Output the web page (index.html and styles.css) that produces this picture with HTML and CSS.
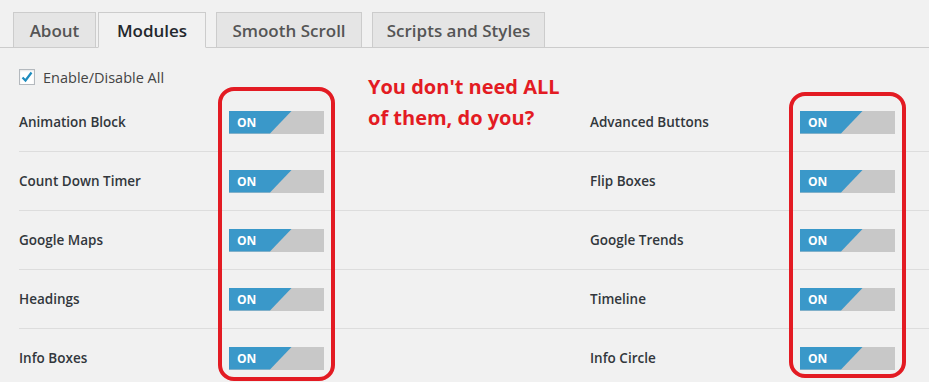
FILE: index.html
```html
<!DOCTYPE html>
<html lang="en">
<head>
  <meta charset="UTF-8" />
  <title>Modules</title>
  <link rel="stylesheet" href="styles.css">
</head>
<body>
  <div class="page">
    <div class="tabs">
      <a class="tab">About</a>
      <a class="tab active">Modules</a>
      <a class="tab">Smooth Scroll</a>
      <a class="tab">Scripts and Styles</a>
    </div>

    <label class="check-all">
      <span class="box">
        <svg width="14" height="14" viewBox="0 0 14 14"><path d="M2.5 7.5 L5.5 10.5 L11.5 2.5" fill="none" stroke="#1e8cbe" stroke-width="2.2"/></svg>
      </span>
      Enable/Disable All
    </label>

    <div class="modules">
      <div class="row"><span class="name">Animation Block</span><span class="toggle"><b>ON</b></span></div>
      <div class="row"><span class="name">Advanced Buttons</span><span class="toggle"><b>ON</b></span></div>
      <div class="row"><span class="name">Count Down Timer</span><span class="toggle"><b>ON</b></span></div>
      <div class="row"><span class="name">Flip Boxes</span><span class="toggle"><b>ON</b></span></div>
      <div class="row"><span class="name">Google Maps</span><span class="toggle"><b>ON</b></span></div>
      <div class="row"><span class="name">Google Trends</span><span class="toggle"><b>ON</b></span></div>
      <div class="row"><span class="name">Headings</span><span class="toggle"><b>ON</b></span></div>
      <div class="row"><span class="name">Timeline</span><span class="toggle"><b>ON</b></span></div>
      <div class="row"><span class="name">Info Boxes</span><span class="toggle"><b>ON</b></span></div>
      <div class="row"><span class="name">Info Circle</span><span class="toggle"><b>ON</b></span></div>
    </div>

    <!-- annotations drawn over the screenshot -->
    <div class="note">You don't need ALL<br>of them, do you?</div>
    <div class="ring ring-left"></div>
    <div class="ring ring-right"></div>
  </div>
</body>
</html>
```

FILE: styles.css
```css
html, body { margin: 0; height: 100%; overflow: hidden; }
body { font-family: "Open Sans", "Noto Sans", sans-serif; background: #f1f1f1; color: #23282d; }
.page { position: relative; height: 382px; }

.tabs {
  display: flex; padding: 12px 0 0 13px;
  border-bottom: 1px solid #cccccc; height: 35px;
}
.tab {
  display: flex; align-items: center; justify-content: center;
  box-sizing: border-box; height: 36px; margin-right: 10px;
  border: 1px solid #cccccc; background: #e5e5e5; color: #555555;
  font-size: 17px; font-weight: 600;
}
.tab:nth-child(1) { width: 83px; margin-right: 2px; }
.tab:nth-child(2) { width: 108px; }
.tab:nth-child(3) { width: 146px; }
.tab:nth-child(4) { width: 173px; }
.tab.active { background: #f1f1f1; border-bottom-color: #f1f1f1; color: #23282d; }

.check-all {
  display: flex; align-items: center; gap: 8px;
  margin: 20px 0 0 19px; height: 18px;
  font-size: 14.5px; color: #444444;
}
.check-all .box {
  display: flex; align-items: center; justify-content: center;
  width: 16px; height: 16px; box-sizing: border-box;
  border: 1px solid #b4b9be; background: #ffffff;
  box-shadow: inset 0 1px 2px rgba(0,0,0,0.1);
}

.modules {
  display: grid; grid-template-columns: 571px 1fr;
  margin: 7px 0 0 19px;
}
.row {
  display: flex; align-items: center; height: 58px;
  border-bottom: 1px solid #dddddd;
}
.name { width: 210px; font-size: 13.5px; font-weight: 600; color: #32373c; }

.toggle {
  position: relative; display: block; width: 95px; height: 23px;
  background: #c8c8c8;
}
.toggle::before {
  content: ""; position: absolute; left: 0; top: 0; width: 100%; height: 100%;
  background: #3a98c9;
  clip-path: polygon(0 0, 63px 0, 41px 100%, 0 100%);
}
.toggle b {
  position: relative; display: block; padding-left: 8px;
  line-height: 23px; font-size: 12px; font-weight: 700; color: #ffffff;
}

.note {
  position: absolute; left: 368px; top: 71px;
  font-size: 20px; font-weight: 700; line-height: 31px; color: #e31b23;
}
.ring {
  position: absolute; border: 4px solid #e31b23; border-radius: 16px;
  box-sizing: border-box; width: 117px;
}
.ring-left { left: 218px; top: 87px; height: 294px; }
.ring-right { left: 789px; top: 92px; height: 286px; }
```
